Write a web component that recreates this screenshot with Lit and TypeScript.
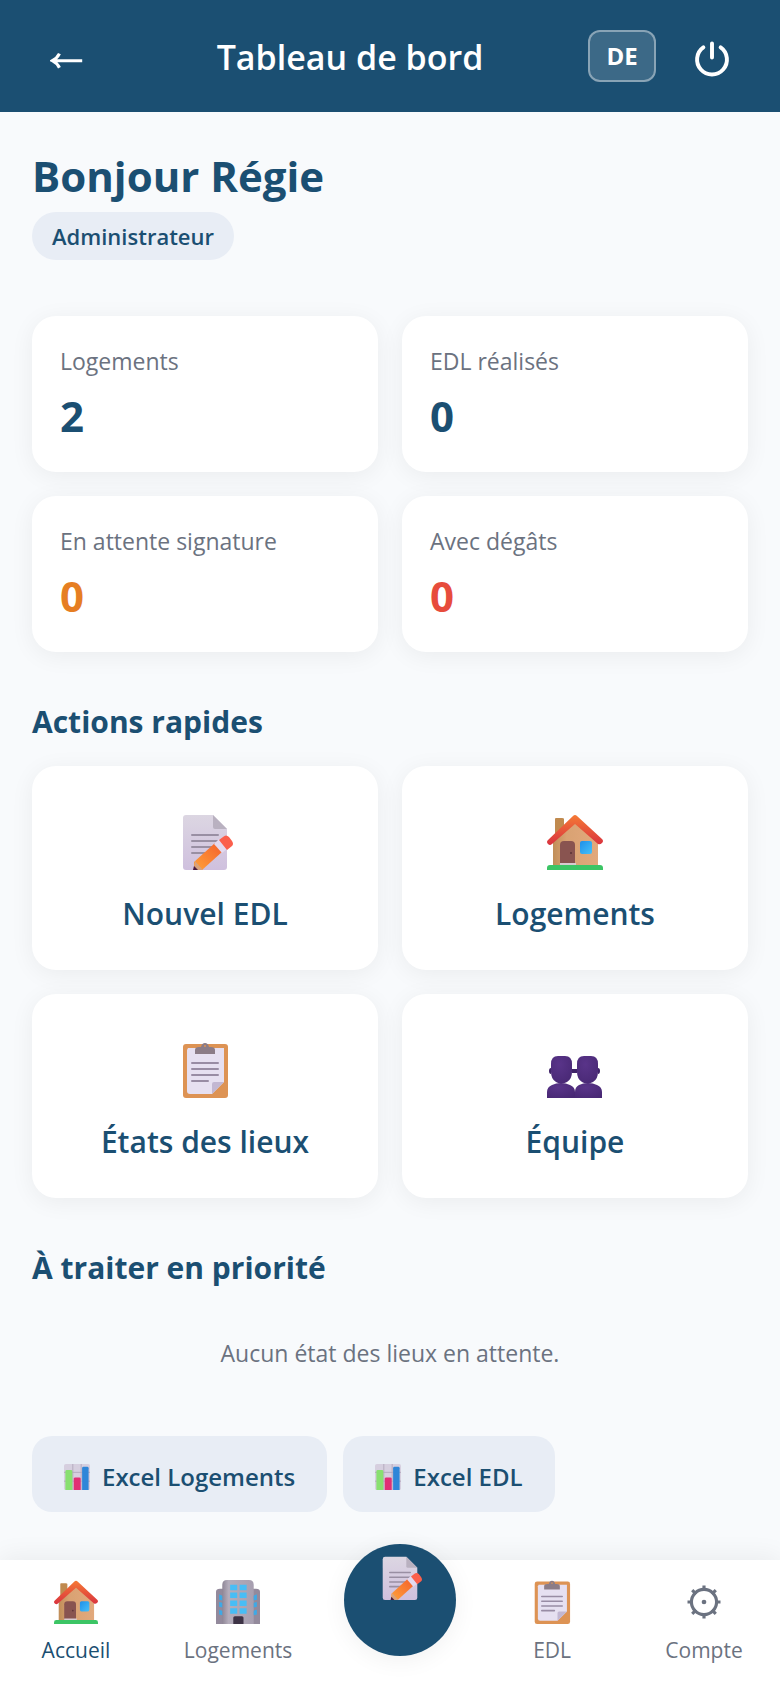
import { LitElement, html, css, svg } from 'lit';
import { customElement, property } from 'lit/decorators.js';
import { classMap } from 'lit/directives/class-map.js';

const icons: Record<string, unknown> = {
    memo: svg`
        <defs>
            <linearGradient id="paper" x1="0" y1="0" x2="0" y2="1">
                <stop offset="0" stop-color="#dcd6e2" />
                <stop offset="1" stop-color="#cfc0de" />
            </linearGradient>
            <linearGradient id="pencil" x1="0" y1="1" x2="1" y2="0">
                <stop offset="0" stop-color="#ffa23a" />
                <stop offset="1" stop-color="#f4602c" />
            </linearGradient>
        </defs>
        <path d="M9 1h27l14 14v38a3 3 0 0 1-3 3H9a3 3 0 0 1-3-3V4a3 3 0 0 1 3-3z" fill="url(#paper)" />
        <path d="M36 1l14 14H38a2 2 0 0 1-2-2z" fill="#b9b1c0" />
        <path d="M15 21h26M15 27h26M15 33h21M15 39h14" stroke="#998fa3" stroke-width="2" stroke-linecap="round" />
        <path d="M17 48l21-19 7 9-20 18h-8z" fill="url(#pencil)" />
        <path d="M18 47l8 9h-9z" fill="#d9a27b" />
        <path d="M17 52l4 4h-5z" fill="#4b1d3f" />
        <path d="M42 25l8 10-5 4-8-9z" fill="#e3d9ef" />
        <path d="M46 23q3-3 6 0l3 4q2 3 0 5l-5 4-8-10z" fill="#fb5f4c" />
    `,
    house: svg`
        <defs>
            <linearGradient id="wall" x1="0" y1="0" x2="1" y2="0">
                <stop offset="0" stop-color="#c08e58" />
                <stop offset="0.3" stop-color="#d9a273" />
                <stop offset="1" stop-color="#e2a97c" />
            </linearGradient>
            <linearGradient id="roof" x1="0" y1="0" x2="0" y2="1">
                <stop offset="0" stop-color="#f57a35" />
                <stop offset="1" stop-color="#d9323f" />
            </linearGradient>
            <linearGradient id="glass" x1="0" y1="0" x2="1" y2="1">
                <stop offset="0" stop-color="#1f8fe8" />
                <stop offset="1" stop-color="#45c1fb" />
            </linearGradient>
        </defs>
        <path d="M8 5q0-1 1-1h6q2 0 2 1v18H8z" fill="#c08a4f" />
        <path d="M28 7l23 21v24H6V28z" fill="url(#wall)" />
        <path d="M13 31q0-4 4-4h7q4 0 4 4v19H13z" fill="#895450" />
        <circle cx="24" cy="39" r="1" fill="#5b3034" />
        <path d="M13 49h16v3H13z" fill="#d8cbd0" />
        <rect x="33" y="27" width="12" height="13" rx="2" fill="url(#glass)" />
        <path d="M26 2q2-2 4 0l25 23q2 2 0 4t-4 1L28 10 5 30q-2 2-4 0t0-4z" fill="url(#roof)" />
        <path d="M3 51h50q3 0 3 3v2H0v-2q0-3 3-3z" fill="#3cc565" />
    `,
    clipboard: svg`
        <rect x="6" y="2" width="45" height="54" rx="3" fill="#dd9354" />
        <path d="M11 6h36v34L35 52H13q-3 0-3-3V8z" fill="#e6e0f1" />
        <path d="M47 40L35 52V42q0-2 2-2z" fill="#c2b7d2" />
        <path d="M18 12V8q0-3 4-3h2q1-4 4-4t4 4h2q4 0 4 3v4z" fill="#8b7c87" />
        <circle cx="28" cy="4" r="1" fill="#dd9354" />
        <path d="M15 21h26M15 27h26M15 33h26M15 39h16" stroke="#988ca4" stroke-width="2" stroke-linecap="round" />
    `,
    team: svg`
        <defs>
            <radialGradient id="bust" cx="0.4" cy="0.3" r="0.8">
                <stop offset="0" stop-color="#593489" />
                <stop offset="1" stop-color="#482874" />
            </radialGradient>
        </defs>
        <path d="M0 56v-6q0-5 5-7 4-2 9-2t9 2q5 2 5 7v6z" fill="url(#bust)" />
        <path d="M28 56v-6q0-5 4-7 4-2 9-2t9 2q5 2 5 7v6z" fill="url(#bust)" />
        <path d="M4 22q0-8 7-8h7q7 0 7 8v8q0 7-5 10-6 3-11 0-5-3-5-10z" fill="url(#bust)" />
        <path d="M30 22q0-8 7-8h7q7 0 7 8v8q0 7-5 10-6 3-11 0-5-3-5-10z" fill="url(#bust)" />
        <path d="M4 26q-2 0-2 3t2 3zM51 26q2 0 2 3t-2 3zM25 27h5v4h-5z" fill="#3f2368" />
    `,
    building: svg`
        <defs>
            <linearGradient id="tower" x1="0" y1="0" x2="1" y2="0">
                <stop offset="0" stop-color="#8f8797" />
                <stop offset="0.2" stop-color="#b4adbb" />
                <stop offset="1" stop-color="#a79fb0" />
            </linearGradient>
        </defs>
        <path d="M0 56V15q0-4 5-4h46q5 0 5 4v41z" fill="#938a9c" />
        <path d="M8 56V6q0-6 6-6h28q6 0 6 6v50z" fill="url(#tower)" />
        <path d="M18 6h9v7h-9zM30 6h9v7h-9zM18 16h9v7h-9zM30 16h9v7h-9zM18 26h9v7h-9zM30 26h9v7h-9zM18 36h9v7h-9zM30 36h9v7h-9z" fill="#48bdf5" />
        <path d="M4 18l4 2v6l-4-1zM4 28l4 1v6l-4-1zM4 38l4 1v6l-4-1zM52 18l-4 2v6l4-1zM52 28l-4 1v6l4-1zM52 38l-4 1v6l4-1z" fill="#3ea9e6" />
        <path d="M22 56v-8q0-2 2-2h9q2 0 2 2v8z" fill="#3d3346" />
    `,
    chart: svg`
        <rect width="56" height="56" rx="4" fill="#d6cfdf" />
        <path d="M0 18h56M0 37h56M19 0v56M37 0v56" stroke="#b2a9bd" stroke-width="2" />
        <path d="M3 56V16q0-3 3-3h9q3 0 3 3v40z" fill="#88e070" />
        <path d="M21 56V32q0-3 3-3h9q3 0 3 3v24z" fill="#e12f74" />
        <path d="M39 56V9q0-3 3-3h8q3 0 3 3v47z" fill="#2f86d8" />
    `,
    gear: svg`
        <g fill="none" stroke="currentColor" stroke-width="4">
            <circle cx="28" cy="28" r="16" />
            <path d="M28 7v6M28 43v6M7 28h6M43 28h6M13 13l5 5M38 38l5 5M43 13l-5 5M18 38l-5 5" />
        </g>
        <circle cx="28" cy="28" r="3" fill="currentColor" />
    `,
    arrow: svg`
        <path d="M4 34h37M12 25q-3 6-9 9 6 3 9 9" fill="none" stroke="currentColor" stroke-width="4" />
    `,
    power: svg`
        <path d="M28 12v18M17 17a19 19 0 1 0 22 0" fill="none" stroke="currentColor" stroke-width="5" stroke-linecap="round" />
    `,
};

@customElement('ui-icon')
export class UiIcon extends LitElement {
    @property() name = '';

    static styles = css`
        :host {
            display: block;
            width: 56px;
            height: 56px;
            flex: none;
        }

        svg {
            display: block;
            width: 100%;
            height: 100%;
        }
    `;

    render() {
        return html`<svg viewBox="0 0 56 56" aria-hidden="true">${icons[this.name]}</svg>`;
    }
}

@customElement('app-root')
export class AppRoot extends LitElement {
    stats = [
        { label: 'Logements', value: 2, tone: '' },
        { label: 'EDL réalisés', value: 0, tone: '' },
        { label: 'En attente signature', value: 0, tone: 'orange' },
        { label: 'Avec dégâts', value: 0, tone: 'red' },
    ];

    actions = [
        { label: 'Nouvel EDL', icon: 'memo' },
        { label: 'Logements', icon: 'house' },
        { label: 'États des lieux', icon: 'clipboard' },
        { label: 'Équipe', icon: 'team' },
    ];

    tabs = [
        { label: 'Accueil', icon: 'house', active: true },
        { label: 'Logements', icon: 'building' },
        { label: '', icon: 'memo' },
        { label: 'EDL', icon: 'clipboard' },
        { label: 'Compte', icon: 'gear' },
    ];

    static styles = css`
        :host {
            --primary: #1b4f72;
            --muted: #6b7280;
            --soft: #e8edf5;
            display: flex;
            flex-direction: column;
            min-height: 100vh;
            background: #f8fafc;
            color: var(--primary);
            font-family: "Open Sans", "Noto Sans", sans-serif;
            font-size: 23px;
            line-height: 34px;
        }

        * {
            box-sizing: border-box;
        }

        h1, h2, p, dl, dd {
            margin: 0;
        }

        button {
            border: 0;
            padding: 0;
            background: none;
            color: inherit;
            font: inherit;
            cursor: pointer;
        }

        header {
            display: flex;
            align-items: center;
            justify-content: space-between;
            height: 112px;
            padding: 0 32px;
            background: var(--primary);
            color: white;
        }

        header h1 {
            padding-top: 2px;
            font-size: 34px;
            font-weight: 600;
            line-height: 48px;
        }

        .round {
            display: flex;
            align-items: center;
            justify-content: center;
            width: 72px;
            height: 72px;
        }

        .back {
            width: 80px;
        }

        .round ui-icon {
            width: 44px;
            height: 44px;
        }

        .tools {
            display: flex;
            align-items: center;
            gap: 20px;
        }

        .lang {
            width: 68px;
            height: 52px;
            border: 2px solid rgba(255, 255, 255, 0.4);
            border-radius: 12px;
            background: rgba(255, 255, 255, 0.15);
            font-size: 24px;
            font-weight: 700;
        }

        main {
            flex: 1;
            padding: 40px 32px 48px;
        }

        .hello {
            font-size: 42px;
            font-weight: 700;
            line-height: 48px;
        }

        .role {
            display: inline-block;
            margin: 12px 0 56px;
            padding: 0 20px;
            border-radius: 24px;
            background: var(--soft);
            font-size: 22px;
            font-weight: 600;
            line-height: 48px;
            vertical-align: top;
        }

        .grid {
            display: grid;
            grid-template-columns: 1fr 1fr;
            gap: 24px;
        }

        .card {
            border-radius: 24px;
            background: white;
            box-shadow: 0 4px 24px rgba(0, 0, 0, 0.06);
        }

        .stat {
            padding: 28px;
        }

        .stat dt {
            margin-bottom: 10px;
            color: var(--muted);
        }

        .stat dd {
            font-size: 42px;
            font-weight: 700;
            line-height: 56px;
        }

        .orange {
            color: #e67e22;
        }

        .red {
            color: #e74c3c;
        }

        .section {
            margin: 48px 0 22px;
            font-size: 30px;
            font-weight: 700;
            line-height: 44px;
        }

        .action {
            display: flex;
            flex-direction: column;
            align-items: center;
            gap: 20px;
            padding: 48px 16px 32px;
            font-size: 30px;
            font-weight: 600;
            line-height: 48px;
        }

        .empty {
            padding: 24px 0 66px;
            color: var(--muted);
            text-align: center;
        }

        .exports {
            display: flex;
            flex-wrap: wrap;
            gap: 16px;
        }

        .export {
            display: flex;
            align-items: center;
            gap: 12px;
            padding: 24px 32px 18px;
            border-radius: 20px;
            background: var(--soft);
            font-size: 24px;
            font-weight: 600;
        }

        .export ui-icon {
            width: 26px;
            height: 26px;
        }

        nav {
            position: sticky;
            bottom: 0;
            display: flex;
            justify-content: space-around;
            align-items: flex-start;
            padding: 20px 0 24px;
            background: white;
            box-shadow: 0 -4px 24px rgba(0, 0, 0, 0.06);
        }

        .tab {
            display: flex;
            flex-direction: column;
            align-items: center;
            gap: 12px;
            min-width: 112px;
            padding: 0 12px;
            color: var(--muted);
            font-size: 21px;
            line-height: 28px;
            text-decoration: none;
        }

        .tab.active {
            color: var(--primary);
        }

        nav ui-icon {
            width: 44px;
            height: 44px;
        }

        .fab {
            display: flex;
            justify-content: center;
            width: 112px;
            height: 112px;
            margin: -36px 0;
            padding-top: 12px;
            border-radius: 50%;
            background: var(--primary);
            box-shadow: 0 4px 24px rgba(0, 0, 0, 0.06);
        }
    `;

    renderTab(tab: { label: string; icon: string; active?: boolean }) {
        if (!tab.label) {
            return html`
                <button class="fab" aria-label="Nouvel EDL">
                    <ui-icon name=${tab.icon}></ui-icon>
                </button>
            `;
        }
        return html`
            <a href="#" class=${classMap({ tab: true, active: !!tab.active })}>
                <ui-icon name=${tab.icon}></ui-icon>
                <span>${tab.label}</span>
            </a>
        `;
    }

    render() {
        return html`
            <header>
                <button class="round back" aria-label="Retour"><ui-icon name="arrow"></ui-icon></button>
                <h1>Tableau de bord</h1>
                <div class="tools">
                    <button class="lang">DE</button>
                    <button class="round" aria-label="Déconnexion"><ui-icon name="power"></ui-icon></button>
                </div>
            </header>

            <main>
                <h2 class="hello">Bonjour Régie</h2>
                <span class="role">Administrateur</span>

                <div class="grid">
                    ${this.stats.map((stat) => html`
                        <dl class="card stat">
                            <dt>${stat.label}</dt>
                            <dd class=${stat.tone}>${stat.value}</dd>
                        </dl>
                    `)}
                </div>

                <h2 class="section">Actions rapides</h2>
                <div class="grid">
                    ${this.actions.map((action) => html`
                        <button class="card action">
                            <ui-icon name=${action.icon}></ui-icon>
                            <span>${action.label}</span>
                        </button>
                    `)}
                </div>

                <h2 class="section">À traiter en priorité</h2>
                <p class="empty">Aucun état des lieux en attente.</p>

                <div class="exports">
                    ${['Excel Logements', 'Excel EDL'].map((label) => html`
                        <button class="export">
                            <ui-icon name="chart"></ui-icon>
                            <span>${label}</span>
                        </button>
                    `)}
                </div>
            </main>

            <nav>${this.tabs.map((tab) => this.renderTab(tab))}</nav>
        `;
    }
}
